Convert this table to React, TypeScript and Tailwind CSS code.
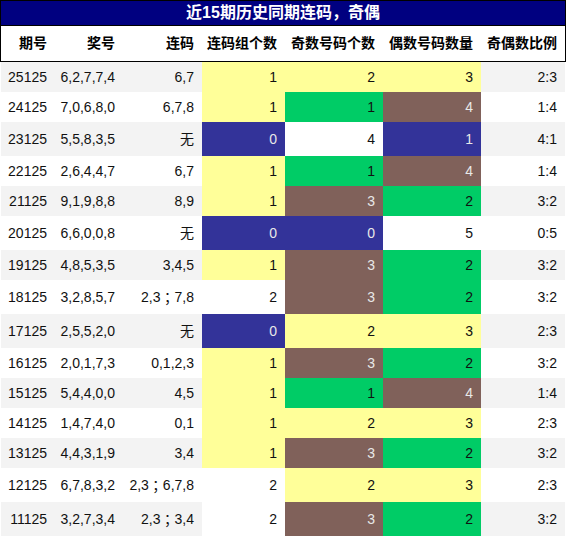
import React from "react";

type Row = [string, string, string, number, number, number, string];

const rows: Row[] = [
  ["25125", "6,2,7,7,4", "6,7", 1, 2, 3, "2:3"],
  ["24125", "7,0,6,8,0", "6,7,8", 1, 1, 4, "1:4"],
  ["23125", "5,5,8,3,5", "无", 0, 4, 1, "4:1"],
  ["22125", "2,6,4,4,7", "6,7", 1, 1, 4, "1:4"],
  ["21125", "9,1,9,8,8", "8,9", 1, 3, 2, "3:2"],
  ["20125", "6,6,0,0,8", "无", 0, 0, 5, "0:5"],
  ["19125", "4,8,5,3,5", "3,4,5", 1, 3, 2, "3:2"],
  ["18125", "3,2,8,5,7", "2,3；7,8", 2, 3, 2, "3:2"],
  ["17125", "2,5,5,2,0", "无", 0, 2, 3, "2:3"],
  ["16125", "2,0,1,7,3", "0,1,2,3", 1, 3, 2, "3:2"],
  ["15125", "5,4,4,0,0", "4,5", 1, 1, 4, "1:4"],
  ["14125", "1,4,7,4,0", "0,1", 1, 2, 3, "2:3"],
  ["13125", "4,4,3,1,9", "3,4", 1, 3, 2, "3:2"],
  ["12125", "6,7,8,3,2", "2,3；6,7,8", 2, 2, 3, "2:3"],
  ["11125", "3,2,7,3,4", "2,3；3,4", 2, 3, 2, "3:2"],
];

const BLUE = "bg-[#333399] text-[#e8e8e8]";
const YELLOW = "bg-[#ffff99] text-[#111]";
const GREEN = "bg-[#00cc66] text-[#111]";
const BROWN = "bg-[#80615a] text-[#e8e8e8]";
const WHITE = "bg-white text-[#111]";

// 连码组个数
const groupColor: Record<number, string> = { 0: BLUE, 1: YELLOW, 2: WHITE };
// 奇数号码个数
const oddColor: Record<number, string> = { 0: BLUE, 1: GREEN, 2: YELLOW, 3: BROWN, 4: WHITE };
// 偶数号码数量
const evenColor: Record<number, string> = { 1: BLUE, 2: GREEN, 3: YELLOW, 4: BROWN, 5: WHITE };

const cols = "grid grid-cols-[54px_68px_79px_83px_98px_98px_84px]";
const cell = "flex items-center justify-end pr-2";

// centred full-width semicolon, as in the sheet
function Link({ text }: { text: string }) {
  const parts = text.split("；");
  return (
    <>
      {parts.map((p, i) => (
        <React.Fragment key={i}>
          {i > 0 && <span className="font-['Noto_Sans_CJK_TC',sans-serif]">；</span>}
          {p}
        </React.Fragment>
      ))}
    </>
  );
}

export default function App() {
  return (
    <div className="w-[566px] h-[537px] bg-white font-['Liberation_Sans','Noto_Sans_CJK_SC',sans-serif] text-[14px] text-[#111]">
      <div className="h-[26px] border border-black bg-[#000080] flex items-center justify-center text-white font-bold text-[16px]">
        近15期历史同期连码，奇偶
      </div>
      <div className={`${cols} h-[36px] border-x border-b border-black font-bold text-[14px] text-black`}>
        {["期号", "奖号", "连码", "连码组个数", "奇数号码个数", "偶数号码数量", "奇偶数比例"].map((h) => (
          <div key={h} className={`${cell} whitespace-nowrap`}>
            {h}
          </div>
        ))}
      </div>
      <div className="px-px">
        {rows.map((r, i) => {
          const tall = /[^\x00-\x7f]/.test(r[2]);
          const bg = i % 2 === 0 ? "bg-[#f3f3f3]" : "bg-white";
          return (
            <div key={r[0]} className={`${cols} ${bg} ${tall ? "h-[34px]" : "h-[30px]"}`}>
              <div className={cell}>{r[0]}</div>
              <div className={cell}>{r[1]}</div>
              <div className={`${cell} whitespace-nowrap`}>
                <Link text={r[2]} />
              </div>
              <div className={`${cell} ${groupColor[r[3]]}`}>{r[3]}</div>
              <div className={`${cell} ${oddColor[r[4]]}`}>{r[4]}</div>
              <div className={`${cell} ${evenColor[r[5]]}`}>{r[5]}</div>
              <div className={cell}>{r[6]}</div>
            </div>
          );
        })}
      </div>
    </div>
  );
}
